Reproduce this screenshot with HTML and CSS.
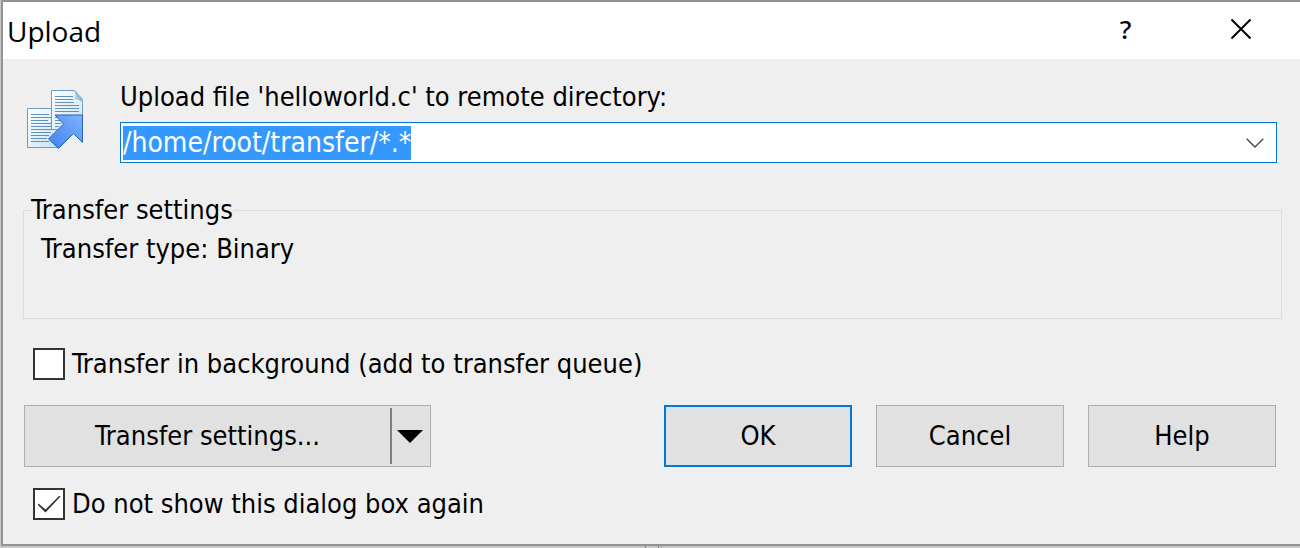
FILE: index.html
```html
<!DOCTYPE html>
<html lang="en">
<head>
<meta charset="utf-8">
<title>Upload</title>
<link rel="stylesheet" href="styles.css">
</head>
<body>
<main class="dialog">
  <header class="titlebar">
    <h1 class="title">Upload</h1>
    <button class="caption-button help-mark" type="button" aria-label="Context help">?</button>
    <button class="caption-button" type="button" aria-label="Close">
      <svg width="22" height="22" viewBox="0 0 22 22"><path d="M1.5 1.5 20.5 20.5M20.5 1.5 1.5 20.5" fill="none" stroke="#000" stroke-width="2"/></svg>
    </button>
  </header>
  <form class="content">
    <div class="target">
      <svg class="upload-icon" width="58" height="60" viewBox="0 0 58 60" aria-hidden="true">
        <defs>
          <linearGradient id="paper" x1="0" y1="0" x2="1" y2="1"><stop offset="0" stop-color="#fff"/><stop offset="1" stop-color="#c5e3f6"/></linearGradient>
          <linearGradient id="arrow" x1="1" y1="0" x2="0" y2="1"><stop offset="0" stop-color="#7db2ff"/><stop offset="1" stop-color="#3f83ea"/></linearGradient>
          <linearGradient id="fold" x1="1" y1="0" x2="0" y2="1"><stop offset="0" stop-color="#4f86b0"/><stop offset="1" stop-color="#e6f2fa"/></linearGradient>
        </defs>
        <path d="M.5 18.500H32V57.500H.5Z" fill="url(#paper)" stroke="#6f9cc4"/>
        <path d="M4 24.500h18M4 27.500h20M4 30.500h17M4 33.500h20M4 36.500h20M4 39.500h24M4 42.500h20M4 45.500h18M4 48.500h16M4 51.500h18" stroke="#6390b8"/>
        <path d="M24.500.5H47.500L55.500 9.500V39.500H24.500Z" fill="url(#paper)" stroke="#6f9cc4"/>
        <path d="M28 6.500h18M28 9.500h18M28 12.500h19M28 15.500h24M28 18.500h24M28 21.500h24M28 27.500h5M28 30.500h6M28 33.500h6M28 36.500h4" stroke="#6390b8"/>
        <path d="M47 .5C49 4 49 7 47 9.500C51 9 54 10 56 14V9.500Z" fill="url(#fold)"/>
        <path d="M28 25H55.500V52.500L46.500 43.500L31.500 58.500L21.500 49L36.500 34Z" fill="url(#arrow)" stroke="#2b65b6"/>
      </svg>
      <div class="target-field">
        <label class="target-label" for="directory">Upload file 'helloworld.c' to remote directory:</label>
        <div class="combo">
          <input class="combo-input" id="directory" type="text" value="/home/root/transfer/*.*" spellcheck="false" autocomplete="off">
          <button class="combo-button" type="button" aria-label="Show recent directories">
            <svg width="18" height="10" viewBox="0 0 18 10"><path d="M.7.7 9 9 17.300.7" fill="none" stroke="#444" stroke-width="1.300"/></svg>
          </button>
        </div>
      </div>
    </div>
    <fieldset class="settings">
      <legend class="settings-title">Transfer settings</legend>
      <p class="settings-text">Transfer type: Binary</p>
    </fieldset>
    <label class="check"><input class="check-box" type="checkbox">Transfer in background (add to transfer queue)</label>
    <div class="actions">
      <div class="split">
        <button class="split-main" type="button">Transfer settings...</button>
        <button class="split-arrow" type="button" aria-label="More transfer settings">
          <svg width="26" height="14" viewBox="0 0 26 14"><path d="M0 1H26L13 14Z"/></svg>
        </button>
      </div>
      <div class="button-row">
        <button class="button button-default" type="submit">OK</button>
        <button class="button" type="button">Cancel</button>
        <button class="button" type="button">Help</button>
      </div>
    </div>
    <label class="check"><input class="check-box" type="checkbox" checked>Do not show this dialog box again</label>
  </form>
</main>
<script src="script.js"></script>
</body>
</html>
```
FILE: styles.css
```css
* { box-sizing: border-box; }
body {
  margin: 0;
  min-height: 100vh;
  padding: 0 0 2px 1px;
  background:
    linear-gradient(90deg, #777 1px, transparent 1px 13px, #777 13px 14px, transparent 14px 16px, #8fa8c4 16px) 645px 100% / 17px 2px no-repeat,
    #c8c8c8;
  font-family: "DejaVu Sans Condensed", Tahoma, sans-serif;
  font-size: 27px;
  line-height: 36px;
  color: #000;
}
button, input { font: inherit; color: inherit; }
button { padding: 0; }
.dialog {
  border: 2px solid #939393;
  border-right: 0;
  background: #efefef;
}
.titlebar {
  display: flex;
  align-items: center;
  height: 57px;
  padding: 0 2px 0 4px;
  background: #fff;
}
.title {
  flex: 1;
  margin: 0;
  font: 400 28px/40px "Open Sans", sans-serif;
}
.caption-button {
  display: flex;
  align-items: center;
  justify-content: center;
  width: 115px;
  height: 53px;
  margin-bottom: 4px;
  border: 0;
  background: transparent;
}
.help-mark { font: 500 26px/36px "Noto Sans", sans-serif; }
.content { padding: 20px 18px 22px 20px; }
.target { display: flex; gap: 35px; padding: 0 5px 0 4px; }
.upload-icon { flex: none; margin-top: 11px; }
.target-field { flex: 1; }
.target-label { display: block; margin-bottom: 7px; }
.combo {
  display: flex;
  height: 41px;
  padding: 2px;
  border: 1px solid #0078d7;
  background: #fff;
}
.combo-input {
  flex: 1;
  min-width: 0;
  padding: 0;
  border: 0;
  outline: 0;
  background: transparent;
  font-size: 28px;
  line-height: 34px;
}
.combo-input::selection { background: rgba(51, 153, 255, 0.996); color: #fff; }
.combo-button {
  display: flex;
  align-items: center;
  justify-content: center;
  width: 38px;
  border: 0;
  background: transparent;
}
.settings {
  min-width: 0;
  min-height: 127px;
  margin: 29px 0 27px;
  padding: 3px 17px 0;
  border: 1px solid #dcdcdc;
}
.settings-title { margin-left: -10px; padding: 0; }
.settings-text { margin: 0; }
.check {
  display: flex;
  align-items: center;
  gap: 7px;
  width: fit-content;
  margin-left: 10px;
}
.check-box {
  display: grid;
  place-items: center;
  appearance: none;
  width: 32px;
  height: 32px;
  margin: 0;
  border: 2px solid #333;
  background: #fff;
}
.check-box:checked::before {
  content: "";
  width: 23px;
  height: 17px;
  background: #333;
  clip-path: polygon(0 9px, 1px 8px, 8px 14px, 22px 0, 23px 1px, 8px 17px);
}
.actions {
  display: flex;
  justify-content: space-between;
  margin: 23px 6px 19px 1px;
}
.split {
  display: flex;
  align-items: center;
  width: 407px;
  height: 62px;
  border: 1px solid #adadad;
  background: #e1e1e1;
}
.split-main { flex: 1; height: 56px; border: 0; background: transparent; }
.split-arrow {
  display: flex;
  align-items: center;
  justify-content: center;
  width: 40px;
  height: 56px;
  padding-right: 3px;
  border: 0;
  border-left: 2px solid #808080;
  background: transparent;
}
.button-row { display: flex; gap: 24px; }
.button {
  width: 188px;
  height: 62px;
  border: 1px solid #adadad;
  background: #e1e1e1;
}
.button-default { border: 2px solid #0078d7; }
```
FILE: script.js
```javascript
const directory = document.getElementById("directory");
directory.focus();
directory.select();
```
